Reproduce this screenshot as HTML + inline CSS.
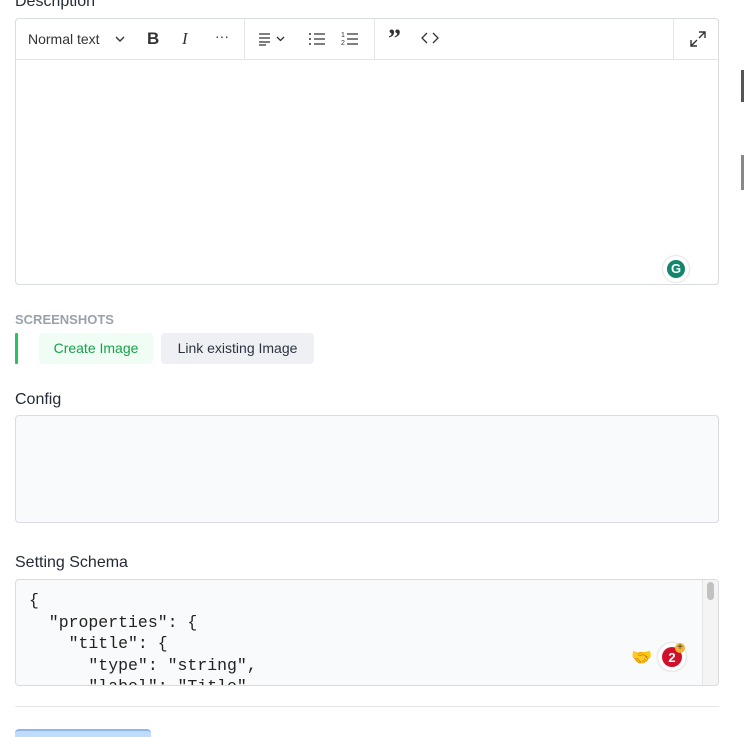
<!DOCTYPE html><html><head><style>
body{margin:0;width:744px;height:732px;overflow:hidden;background:#fff;font-family:"Liberation Sans",sans-serif;color:#1f2937;position:relative}
.a{position:absolute}
.lbl{font-size:16px;color:#252b36}
.box{border:1px solid #d9dce1;border-radius:4px;box-sizing:border-box}
.tb{font-size:14px;color:#333}
</style></head><body>
<div class="a lbl" style="left:15px;top:-7px">Description</div>
<div class="a box" style="left:15px;top:18px;width:704px;height:267px"></div>
<div class="a" style="left:16px;top:59px;width:702px;height:1px;background:#e3e5e8"></div>
<div class="a" style="left:244px;top:19px;width:1px;height:40px;background:#e3e5e8"></div>
<div class="a" style="left:374px;top:19px;width:1px;height:40px;background:#e3e5e8"></div>
<div class="a" style="left:673px;top:19px;width:1px;height:40px;background:#e3e5e8"></div>
<div class="a tb" style="left:28px;top:31px">Normal text</div>
<svg class="a" style="left:114px;top:34px" width="12" height="10"><path d="M2 3l4 4 4-4" fill="none" stroke="#333" stroke-width="1.4"/></svg>
<div class="a" style="left:147px;top:29px;font-size:17px;font-weight:bold;color:#333">B</div>
<div class="a" style="left:182px;top:29px;font-size:17px;font-style:italic;font-family:'Liberation Serif',serif;color:#333">I</div>
<div class="a" style="left:215px;top:28px;font-size:14px;color:#333">···</div>
<svg class="a" style="left:258px;top:31px" width="32" height="16"><path d="M1 3h11M1 7h11M1 11h11M1 14h7" stroke="#333" stroke-width="1.3"/><path d="M19 6l3.5 3.5L26 6" fill="none" stroke="#333" stroke-width="1.3"/></svg>
<svg class="a" style="left:308px;top:31px" width="18" height="16"><circle cx="2" cy="3" r="1" fill="#333"/><circle cx="2" cy="8" r="1" fill="#333"/><circle cx="2" cy="13" r="1" fill="#333"/><path d="M6 3h11M6 8h11M6 13h11" stroke="#333" stroke-width="1.3"/></svg>
<svg class="a" style="left:341px;top:30px" width="18" height="17"><text x="0" y="7" font-size="7" fill="#333">1</text><text x="0" y="15" font-size="7" fill="#333">2</text><path d="M6 4h11M6 9h11M6 14h11" stroke="#333" stroke-width="1.3"/></svg>
<div class="a" style="left:388px;top:24px;font-size:26px;font-weight:bold;color:#333;font-family:'Liberation Serif',serif">”</div>
<svg class="a" style="left:421px;top:32px" width="18" height="12"><path d="M6 1L1 6l5 5M12 1l5 5-5 5" fill="none" stroke="#333" stroke-width="1.3"/></svg>
<svg class="a" style="left:689px;top:30px" width="18" height="18"><path d="M10 2h6v6M16 2l-6 6M2 10v6h6M2 16l6-6" fill="none" stroke="#333" stroke-width="1.4"/></svg>
<div class="a" style="left:663px;top:256px;width:26px;height:26px;border-radius:50%;background:#fff;box-shadow:0 0 2px #bbb"></div>
<div class="a" style="left:667px;top:260px;width:18px;height:18px;border-radius:50%;background:#12866d;color:#fff;font-size:13px;font-weight:bold;text-align:center;line-height:18px">G</div>
<div class="a" style="left:15px;top:312px;font-size:13px;font-weight:bold;color:#9aa1ad">SCREENSHOTS</div>
<div class="a" style="left:15px;top:333px;width:3px;height:31px;background:#22c55e;border-radius:1px"></div>
<div class="a" style="left:39px;top:333px;width:114px;height:31px;background:#effdf4;border-radius:4px;color:#16a34a;font-size:14px;line-height:31px;text-align:center">Create Image</div>
<div class="a" style="left:161px;top:333px;width:153px;height:31px;background:#eef0f3;border-radius:4px;color:#2d3340;font-size:14px;line-height:31px;text-align:center">Link existing Image</div>
<div class="a lbl" style="left:15px;top:391px">Config</div>
<div class="a box" style="left:15px;top:415px;width:704px;height:108px;background:#f9fafb"></div>
<div class="a lbl" style="left:15px;top:554px">Setting Schema</div>
<div class="a box" style="left:15px;top:579px;width:704px;height:107px;background:#f9fafb;overflow:hidden">
<pre style="margin:0;position:absolute;left:13px;top:10px;font-family:'Liberation Mono',monospace;font-size:16.5px;line-height:21.6px;color:#222">{
  "properties": {
    "title": {
      "type": "string",
      "label": "Title",</pre>
<div class="a" style="right:0;top:0;width:15px;height:105px;background:#f4f4f4;border-left:1px solid #e5e5e5"></div>
<div class="a" style="right:4px;top:2px;width:7px;height:18px;background:#c1c1c1;border-radius:4px"></div>
</div>
<div class="a" style="left:631px;top:648px;font-size:17px">🤝</div>
<div class="a" style="left:658px;top:643px;width:28px;height:28px;border-radius:50%;background:#fff;box-shadow:0 0 2px #bbb"></div>
<div class="a" style="left:662px;top:647px;width:20px;height:20px;border-radius:50%;background:#d0112b;color:#fff;font-size:13px;font-weight:bold;text-align:center;line-height:22px">2</div>
<div class="a" style="left:675px;top:643px;width:10px;height:10px;border-radius:50%;background:#f2b233;color:#333;font-size:10px;line-height:10px;text-align:center">+</div>
<div class="a" style="left:15px;top:706px;width:704px;height:1px;background:#e3e5e8"></div>
<div class="a" style="left:15px;top:729px;width:136px;height:6px;background:#bfdbfe;border-radius:4px 4px 0 0;border-top:2px solid #8fb6ef"></div>
<div class="a" style="left:741px;top:70px;width:3px;height:32px;background:#555"></div>
<div class="a" style="left:741px;top:155px;width:3px;height:35px;background:#888"></div>
</body></html>
